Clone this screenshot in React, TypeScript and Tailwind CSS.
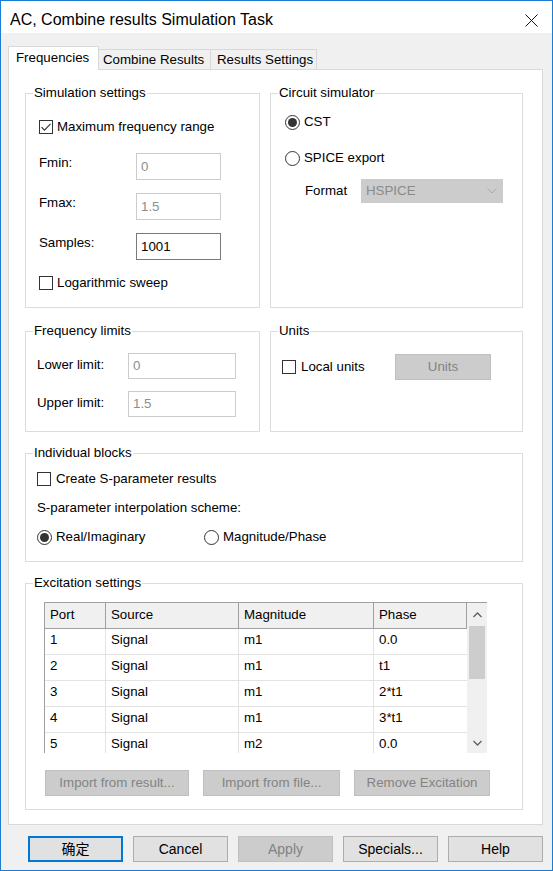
import React from "react";

function CheckBox({ checked = false }: { checked?: boolean }) {
  return (
    <span className="flex h-[14px] w-[14px] shrink-0 items-center justify-center border border-[#333333] bg-white">
      {checked && (
        <svg width="12" height="12" viewBox="0 0 12 12">
          <path d="M1.5 6.2 L4.5 9.2 L10.5 2.8" fill="none" stroke="#333" strokeWidth="1.1" />
        </svg>
      )}
    </span>
  );
}

function Radio({ checked = false }: { checked?: boolean }) {
  return (
    <span className="flex h-[15px] w-[15px] shrink-0 items-center justify-center rounded-full border border-[#333333] bg-white">
      {checked && <span className="h-[9px] w-[9px] rounded-full bg-[#333333]" />}
    </span>
  );
}

function GroupBox({
  title,
  className,
  children,
}: {
  title: string;
  className: string;
  children?: React.ReactNode;
}) {
  return (
    <div className={`relative border border-[#dcdcdc] ${className}`}>
      <span className="absolute -top-[9px] left-[7px] bg-white px-[1px] leading-[16px]">{title}</span>
      {children}
    </div>
  );
}

function Field({ value, enabled = false, w }: { value: string; enabled?: boolean; w: string }) {
  return (
    <div
      className={`flex items-center bg-white px-[4px] ${w} ${
        enabled ? "border border-[#7a7a7a] text-black" : "border border-[#cccccc] text-[#8d8d8d]"
      }`}
    >
      {value}
    </div>
  );
}

function GreyButton({ label, w }: { label: string; w: string }) {
  return (
    <div className={`flex h-[26px] items-center justify-center border border-[#bfbfbf] bg-[#cccccc] text-[#838383] ${w}`}>
      {label}
    </div>
  );
}

const rows = [
  ["1", "Signal", "m1", "0.0"],
  ["2", "Signal", "m1", "t1"],
  ["3", "Signal", "m1", "2*t1"],
  ["4", "Signal", "m1", "3*t1"],
  ["5", "Signal", "m2", "0.0"],
];

export default function App() {
  return (
    <div className="flex h-[871px] w-[553px] flex-col border border-[#1c7bd2] bg-[#f0f0f0] text-[13.3px] leading-[16px] text-black font-['Liberation_Sans','Noto_Sans_CJK_SC',sans-serif]">
      {/* title bar */}
      <div className="flex h-[32px] shrink-0 items-center justify-between bg-white pl-[9px] pr-[14px] pt-[6px]">
        <span className="text-[16px]">AC, Combine results Simulation Task</span>
        <svg width="13" height="13" viewBox="0 0 13 13">
          <path d="M0.5 0.5 L12.5 12.5 M12.5 0.5 L0.5 12.5" stroke="#111" strokeWidth="1" />
        </svg>
      </div>

      {/* tabs */}
      <div className="ml-[7px] mt-[13px] flex h-[23px] items-end">
        <div className="relative z-10 -mb-px flex h-[24px] w-[91px] items-start border border-b-0 border-[#d9d9d9] bg-white pl-[7px] pt-[3px]">
          Frequencies
        </div>
        <div className="flex h-[20px] w-[112px] items-center border border-b-0 border-l-0 border-[#d9d9d9] bg-[#f0f0f0] pl-[4px]">
          Combine Results
        </div>
        <div className="flex h-[20px] w-[106px] items-center border border-b-0 border-l-0 border-[#d9d9d9] bg-[#f0f0f0] pl-[6px]">
          Results Settings
        </div>
      </div>

      {/* panel */}
      <div className="ml-[7px] flex h-[756px] w-[535px] flex-col border border-[#d9d9d9] bg-white pl-[16px] pr-[19px] pt-[23px]">
        <div className="flex gap-[10px]">
          <GroupBox title="Simulation settings" className="flex h-[215px] w-[235px] flex-col pl-[13px]">
            <div className="mt-[25px] flex h-[16px] items-center gap-[4px]">
              <CheckBox checked />
              <span>Maximum frequency range</span>
            </div>
            <div className="mt-[18px] flex h-[27px]">
              <span className="mt-[2px] w-[97px]">Fmin:</span>
              <Field value="0" w="w-[85px]" />
            </div>
            <div className="mt-[13px] flex h-[27px]">
              <span className="mt-[2px] w-[97px]">Fmax:</span>
              <Field value="1.5" w="w-[85px]" />
            </div>
            <div className="mt-[13px] flex h-[27px]">
              <span className="mt-[2px] w-[97px]">Samples:</span>
              <Field value="1001" enabled w="w-[85px]" />
            </div>
            <div className="mt-[15px] flex h-[16px] items-center gap-[4px]">
              <CheckBox />
              <span>Logarithmic sweep</span>
            </div>
          </GroupBox>

          <GroupBox title="Circuit simulator" className="flex h-[215px] w-[253px] flex-col pl-[14px]">
            <div className="mt-[20px] flex h-[16px] items-center gap-[4px]">
              <Radio checked />
              <span>CST</span>
            </div>
            <div className="mt-[20px] flex h-[16px] items-center gap-[4px]">
              <Radio />
              <span>SPICE export</span>
            </div>
            <div className="mt-[13px] flex h-[24px] items-center pl-[20px]">
              <span className="w-[56px]">Format</span>
              <div className="flex h-[24px] w-[142px] items-center justify-between bg-[#cccccc] pl-[5px] pr-[6px] text-[#8a8a8a]">
                <span>HSPICE</span>
                <svg width="10" height="6" viewBox="0 0 10 6">
                  <path d="M0.5 0.5 L5 5 L9.5 0.5" fill="none" stroke="#a8a8a8" strokeWidth="1" />
                </svg>
              </div>
            </div>
          </GroupBox>
        </div>

        <div className="mt-[23px] flex gap-[10px]">
          <GroupBox title="Frequency limits" className="flex h-[101px] w-[235px] flex-col pl-[11px]">
            <div className="mt-[21px] flex h-[26px]">
              <span className="mt-[4px] w-[91px]">Lower limit:</span>
              <Field value="0" w="w-[108px]" />
            </div>
            <div className="mt-[12px] flex h-[26px]">
              <span className="mt-[4px] w-[91px]">Upper limit:</span>
              <Field value="1.5" w="w-[108px]" />
            </div>
          </GroupBox>

          <GroupBox title="Units" className="flex h-[101px] w-[253px] flex-col pl-[11px]">
            <div className="mt-[23px] flex h-[24px] items-center">
              <div className="flex w-[113px] items-center gap-[5px]">
                <CheckBox />
                <span>Local units</span>
              </div>
              <GreyButton label="Units" w="w-[96px] h-[25px]" />
            </div>
          </GroupBox>
        </div>

        <GroupBox title="Individual blocks" className="mt-[21px] flex h-[109px] w-[498px] flex-col pl-[11px]">
          <div className="mt-[17px] flex h-[16px] items-center gap-[5px]">
            <CheckBox />
            <span>Create S-parameter results</span>
          </div>
          <div className="mt-[13px] h-[16px]">S-parameter interpolation scheme:</div>
          <div className="mt-[13px] flex h-[16px] items-center">
            <div className="flex w-[167px] items-center gap-[4px]">
              <Radio checked />
              <span>Real/Imaginary</span>
            </div>
            <div className="flex items-center gap-[4px]">
              <Radio />
              <span>Magnitude/Phase</span>
            </div>
          </div>
        </GroupBox>

        <GroupBox title="Excitation settings" className="mt-[21px] flex h-[227px] w-[498px] flex-col pl-[18px]">
          <div className="mt-[18px] flex h-[151px] w-[443px] overflow-hidden border-l border-t border-[#a0a0a0]">
            <div className="flex flex-col">
              <div className="flex h-[26px] shrink-0 bg-[#f0f0f0]">
                <div className="w-[61px] border-b border-r border-[#a0a0a0] pl-[5px] pt-[4px]">Port</div>
                <div className="w-[133px] border-b border-r border-[#a0a0a0] pl-[5px] pt-[4px]">Source</div>
                <div className="w-[135px] border-b border-r border-[#a0a0a0] pl-[5px] pt-[4px]">Magnitude</div>
                <div className="w-[93px] border-b border-r border-[#a0a0a0] pl-[5px] pt-[4px]">Phase</div>
              </div>
              {rows.map((r) => (
                <div key={r[0]} className="flex h-[26px] shrink-0">
                  <div className="w-[61px] border-b border-r border-[#e3e3e3] pl-[5px] pt-[3px]">{r[0]}</div>
                  <div className="w-[133px] border-b border-r border-[#e3e3e3] pl-[5px] pt-[3px]">{r[1]}</div>
                  <div className="w-[135px] border-b border-r border-[#e3e3e3] pl-[5px] pt-[3px]">{r[2]}</div>
                  <div className="w-[93px] border-b border-[#e3e3e3] pl-[5px] pt-[3px]">{r[3]}</div>
                </div>
              ))}
            </div>
            <div className="flex w-[21px] flex-col bg-[#f0f0f0]">
              <div className="flex h-[23px] items-center justify-center">
                <svg width="9" height="6" viewBox="0 0 9 6">
                  <path d="M0.5 5 L4.5 1 L8.5 5" fill="none" stroke="#606060" strokeWidth="1.3" />
                </svg>
              </div>
              <div className="mx-[2px] h-[53px] bg-[#cdcdcd]" />
              <div className="flex-1" />
              <div className="flex h-[20px] items-center justify-center">
                <svg width="9" height="6" viewBox="0 0 9 6">
                  <path d="M0.5 1 L4.5 5 L8.5 1" fill="none" stroke="#606060" strokeWidth="1.3" />
                </svg>
              </div>
            </div>
          </div>
          <div className="mt-[17px] flex gap-[14px] pl-[1px]">
            <GreyButton label="Import from result..." w="w-[144px]" />
            <GreyButton label="Import from file..." w="w-[137px]" />
            <GreyButton label="Remove Excitation" w="w-[136px]" />
          </div>
        </GroupBox>
      </div>

      {/* dialog buttons */}
      <div className="ml-[27px] mt-[11px] flex gap-[10px]">
        <div className="flex h-[26px] w-[95px] items-center justify-center border-2 border-[#0078d7] bg-[#e1e1e1] text-[14px]">
          确定
        </div>
        <div className="flex h-[26px] w-[95px] items-center justify-center border border-[#adadad] bg-[#e1e1e1] text-[14px]">
          Cancel
        </div>
        <div className="flex h-[26px] w-[95px] items-center justify-center border border-[#bfbfbf] bg-[#cccccc] text-[14px] text-[#838383]">
          Apply
        </div>
        <div className="flex h-[26px] w-[95px] items-center justify-center border border-[#adadad] bg-[#e1e1e1] text-[14px]">
          Specials...
        </div>
        <div className="flex h-[26px] w-[95px] items-center justify-center border border-[#adadad] bg-[#e1e1e1] text-[14px]">
          Help
        </div>
      </div>
    </div>
  );
}
